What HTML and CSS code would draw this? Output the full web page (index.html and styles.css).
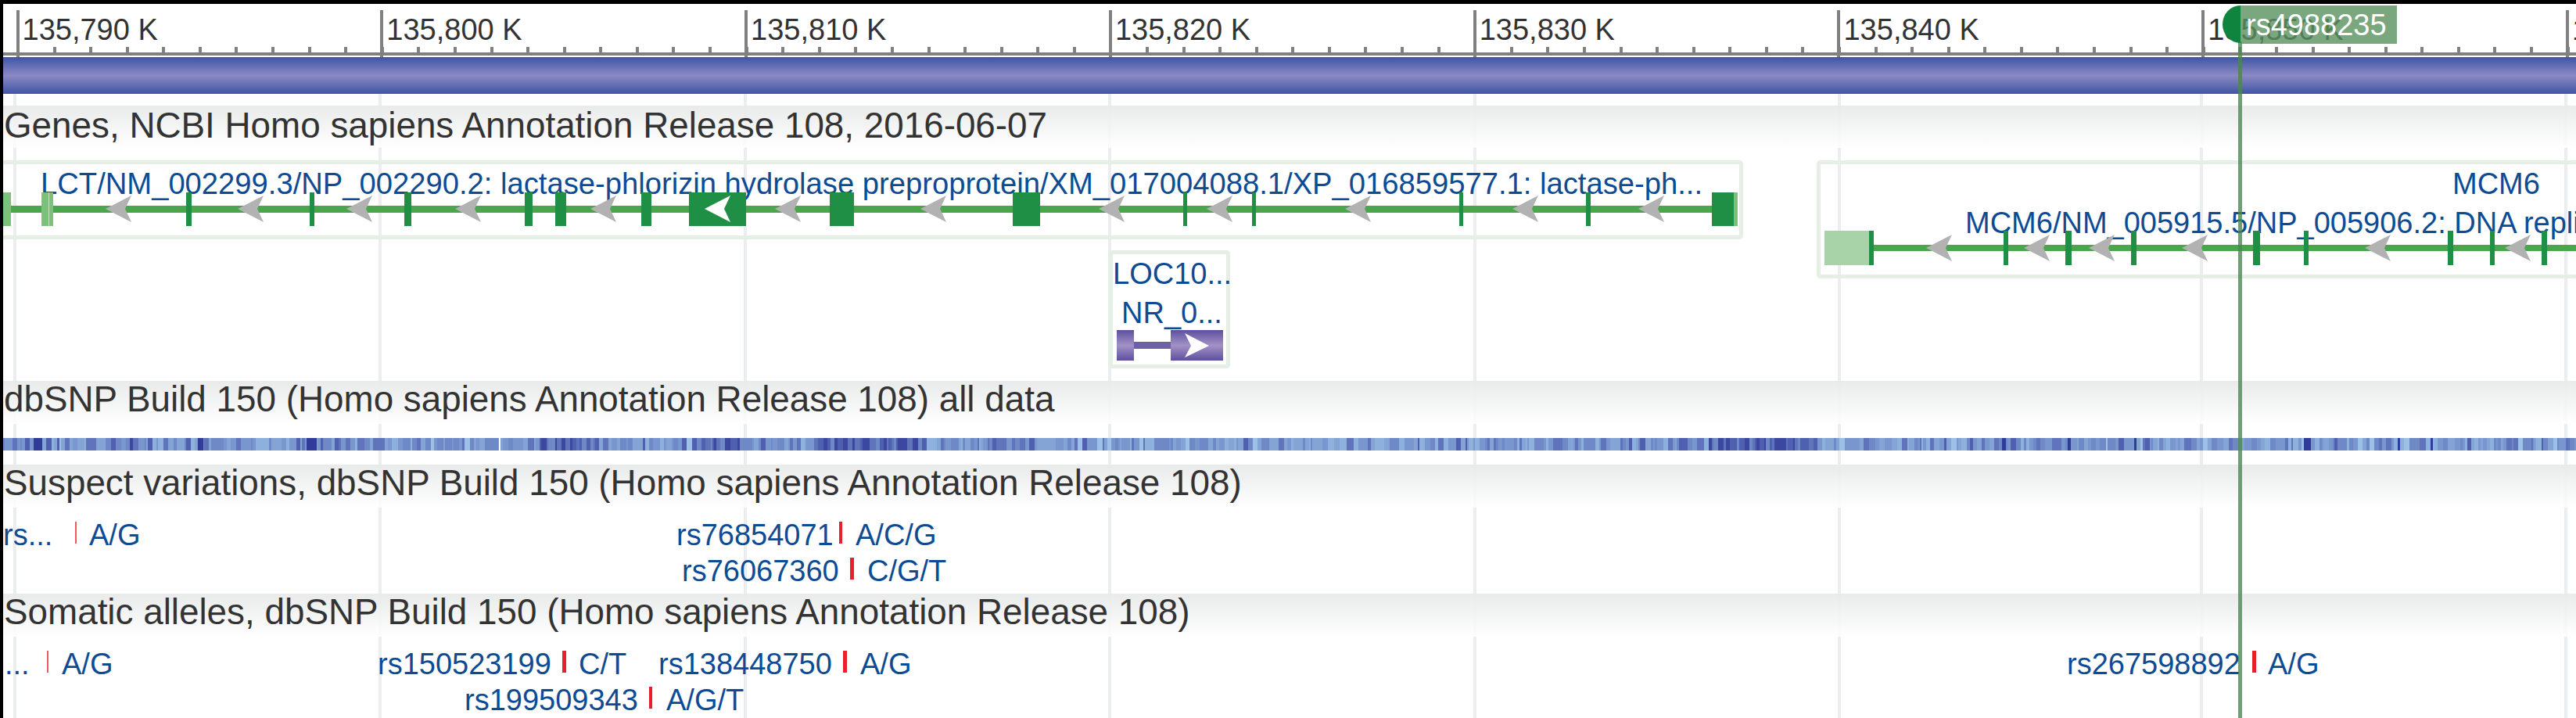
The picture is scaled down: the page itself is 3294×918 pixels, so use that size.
FILE: index.html
```html
<!DOCTYPE html>
<html lang="en">
<head>
    <meta charset="UTF-8">
    <title>Sequence viewer</title>
    <link rel="stylesheet" href="styles.css">
</head>
<body>
<div class="viewer">
    <!-- grid lines sit under all the tracks -->
    <svg class="grid-lines" width="3290" height="798" viewBox="4 120 3290 798">
        <rect x="17" y="120" width="4" height="798"/>
        <rect x="484" y="120" width="4" height="798"/>
        <rect x="951" y="120" width="4" height="798"/>
        <rect x="1417" y="120" width="4" height="798"/>
        <rect x="1884" y="120" width="4" height="798"/>
        <rect x="2350" y="120" width="4" height="798"/>
        <rect x="2813" y="120" width="4" height="798"/>
        <rect x="3279" y="120" width="4" height="798"/>
    </svg>

    <div class="tracks">
        <div class="ruler">
            <div class="ruler-cell">135,790 K</div>
            <div class="ruler-cell">135,800 K</div>
            <div class="ruler-cell">135,810 K</div>
            <div class="ruler-cell">135,820 K</div>
            <div class="ruler-cell">135,830 K</div>
            <div class="ruler-cell">135,840 K</div>
            <div class="ruler-cell">135,850 K</div>
            <div class="ruler-cell">135,860 K</div>
        </div>
        <div class="sequence-bar"></div>

        <div class="track-title track-title-first">Genes, NCBI Homo sapiens Annotation Release 108, 2016-06-07</div>
        <svg class="track-body" width="3290" height="298" viewBox="4 189 3290 298">
            <defs>
                <polygon id="arrow-left" points="0,0 33,-17 25,0 33,17"/>
                <linearGradient id="purple-exon" x1="0" y1="0" x2="0" y2="1">
                    <stop offset="0" stop-color="#5e4f9f"/>
                    <stop offset="0.5" stop-color="#a291c6"/>
                    <stop offset="1" stop-color="#5e4f9f"/>
                </linearGradient>
            </defs>

            <!-- LCT -->
            <rect class="gene-frame" x="-10" y="207.5" width="2236.5" height="96" rx="2"/>
            <text class="feature-label feature-label-long" x="52" y="248">LCT/NM_002299.3/NP_002290.2: lactase-phlorizin hydrolase preproprotein/XM_017004088.1/XP_016859577.1: lactase-ph...</text>
            <rect class="intron" x="4" y="263" width="2218" height="9"/>
            <rect class="utr" x="4" y="246" width="10" height="43"/>
            <rect class="utr" x="53" y="246" width="15" height="43"/>
            <rect class="utr-seam" x="62" y="246" width="1" height="43"/>
            <rect class="exon" x="238" y="246" width="7" height="43"/>
            <rect class="exon" x="396" y="246" width="6" height="43"/>
            <rect class="exon" x="517" y="246" width="9" height="43"/>
            <rect class="exon" x="671" y="246" width="10" height="43"/>
            <rect class="exon" x="710" y="246" width="14" height="43"/>
            <rect class="exon" x="820" y="246" width="13" height="43"/>
            <rect class="exon" x="881" y="246" width="73" height="43"/>
            <rect class="exon" x="1061" y="246" width="31" height="43"/>
            <rect class="exon" x="1295" y="246" width="35" height="43"/>
            <rect class="exon" x="1513" y="246" width="5" height="43"/>
            <rect class="exon" x="1601" y="246" width="5" height="43"/>
            <rect class="exon" x="1866" y="246" width="5" height="43"/>
            <rect class="exon" x="2028" y="246" width="6" height="43"/>
            <rect class="exon" x="2189" y="246" width="28" height="43"/>
            <rect class="utr" x="2217" y="246" width="5" height="43"/>
            <use class="arrow" href="#arrow-left" x="135" y="267"/>
            <use class="arrow" href="#arrow-left" x="304" y="267"/>
            <use class="arrow" href="#arrow-left" x="443" y="267"/>
            <use class="arrow" href="#arrow-left" x="582" y="267"/>
            <use class="arrow" href="#arrow-left" x="755" y="267"/>
            <use class="arrow-white" href="#arrow-left" x="901" y="267"/>
            <use class="arrow" href="#arrow-left" x="991" y="267"/>
            <use class="arrow" href="#arrow-left" x="1177" y="267"/>
            <use class="arrow" href="#arrow-left" x="1405" y="267"/>
            <use class="arrow" href="#arrow-left" x="1543" y="267"/>
            <use class="arrow" href="#arrow-left" x="1720" y="267"/>
            <use class="arrow" href="#arrow-left" x="1934" y="267"/>
            <use class="arrow" href="#arrow-left" x="2095" y="267"/>

            <!-- MCM6 -->
            <rect class="gene-frame" x="2325.5" y="207.5" width="1000" height="146" rx="2"/>
            <text class="feature-label" x="3136" y="248">MCM6</text>
            <text class="feature-label" x="2513" y="298">MCM6/NM_005915.5/NP_005906.2: DNA replication licensing factor MCM6</text>
            <rect class="intron" x="2390" y="313" width="904" height="8"/>
            <rect class="utr-pale" x="2333" y="295" width="57" height="44"/>
            <rect class="exon" x="2390" y="295" width="6" height="44"/>
            <rect class="exon" x="2562" y="295" width="6" height="44"/>
            <rect class="exon" x="2641" y="295" width="8" height="44"/>
            <rect class="exon" x="2725" y="295" width="7" height="44"/>
            <rect class="exon" x="2881" y="295" width="9" height="44"/>
            <rect class="exon" x="2946" y="295" width="6" height="44"/>
            <rect class="exon" x="3130" y="295" width="7" height="44"/>
            <rect class="exon" x="3184" y="295" width="6" height="44"/>
            <rect class="exon" x="3250" y="295" width="7" height="44"/>
            <use class="arrow" href="#arrow-left" x="2463" y="317"/>
            <use class="arrow" href="#arrow-left" x="2588" y="317"/>
            <use class="arrow" href="#arrow-left" x="2671" y="317"/>
            <use class="arrow" href="#arrow-left" x="2790" y="317"/>
            <use class="arrow" href="#arrow-left" x="3024" y="317"/>
            <use class="arrow" href="#arrow-left" x="3203" y="317"/>

            <!-- LOC -->
            <rect class="gene-frame" x="1420.5" y="322.5" width="150" height="146" rx="2"/>
            <text class="feature-label" x="1423" y="363">LOC10...</text>
            <text class="feature-label" x="1434" y="413">NR_0...</text>
            <rect class="rna-intron" x="1450" y="437" width="47" height="9"/>
            <rect class="rna-exon" x="1428" y="422" width="22" height="39"/>
            <rect class="rna-exon" x="1497" y="422" width="67" height="39"/>
            <polygon class="arrow-white" points="1515,426 1546,442 1515,457 1523,442"/>
        </svg>

        <div class="track-title">dbSNP Build 150 (Homo sapiens Annotation Release 108) all data</div>
        <div class="density-body">
            <svg id="density" class="density-bar" width="3290" height="16" viewBox="4 0 3290 16"></svg>
        </div>

        <div class="track-title">Suspect variations, dbSNP Build 150 (Homo sapiens Annotation Release 108)</div>
        <svg class="track-body" width="3290" height="110" viewBox="4 649 3290 110">
            <text class="feature-label" x="4" y="697">rs...</text>
            <rect class="allele-thin" x="96" y="667" width="2" height="28"/>
            <text class="feature-label" x="114" y="697">A/G</text>

            <text class="feature-label" x="865" y="697">rs76854071</text>
            <rect class="allele" x="1073" y="667" width="4" height="28"/>
            <text class="feature-label" x="1094" y="697">A/C/G</text>

            <text class="feature-label" x="872" y="743">rs76067360</text>
            <rect class="allele" x="1087" y="713" width="5" height="28"/>
            <text class="feature-label" x="1109" y="743">C/G/T</text>
        </svg>

        <div class="track-title">Somatic alleles, dbSNP Build 150 (Homo sapiens Annotation Release 108)</div>
        <svg class="track-body" width="3290" height="104" viewBox="4 814 3290 104">
            <text class="feature-label" x="6" y="862">...</text>
            <rect class="allele-thin" x="60" y="832" width="2" height="28"/>
            <text class="feature-label" x="79" y="862">A/G</text>

            <text class="feature-label" x="483" y="862">rs150523199</text>
            <rect class="allele" x="719" y="832" width="5" height="28"/>
            <text class="feature-label" x="740" y="862">C/T</text>

            <text class="feature-label" x="842" y="862">rs138448750</text>
            <rect class="allele" x="1078" y="832" width="5" height="28"/>
            <text class="feature-label" x="1100" y="862">A/G</text>

            <text class="feature-label" x="594" y="908">rs199509343</text>
            <rect class="allele" x="830" y="878" width="4" height="28"/>
            <text class="feature-label" x="852" y="908">A/G/T</text>

            <text class="feature-label" x="2643" y="862">rs267598892</text>
            <rect class="allele" x="2880" y="832" width="5" height="28"/>
            <text class="feature-label" x="2900" y="862">A/G</text>
        </svg>
    </div>

    <!-- rs4988235 marker, over everything -->
    <div class="marker">
        <div class="marker-line"></div>
        <div class="marker-cap"></div>
        <div class="marker-flag">rs4988235</div>
    </div>
</div>
<script src="script.js"></script>
</body>
</html>
```

FILE: styles.css
```css
html, body {
    margin: 0;
    height: 918px;
    overflow: hidden;
    background-color: #000;
}

.viewer {
    position: relative;
    width: 3290px;
    height: 913px;
    margin: 5px 0 0 4px;
    overflow: hidden;
    background-color: #fff;
    font-family: "Liberation Sans", Arial, sans-serif;
    color: #333;
}

.grid-lines {
    position: absolute;
    left: 0;
    top: 115px;
    fill: #ecedee;
}

.tracks {
    position: relative;
    z-index: 1;
}

.ruler {
    display: flex;
    height: 68px;
    padding-left: 16.5px;
    box-sizing: border-box;
    background:
        linear-gradient(#808080, #808080) 0 62px / 100% 4px no-repeat,
        repeating-linear-gradient(90deg, #808080 0 4px, transparent 4px 46.58px) 16.5px 55px / 100% 7px no-repeat;
}

.ruler-cell {
    flex: 0 0 465.8px;
    box-sizing: border-box;
    height: 60px;
    margin-top: 8px;
    padding: 6px 0 0 4px;
    border-left: 4px solid #808080;
    font-size: 38px;
    line-height: 38px;
    white-space: nowrap;
}

.sequence-bar {
    height: 47px;
    background: linear-gradient(#3f55a5, #8b89c4 50%, #3f55a5);
}

.track-title {
    height: 55px;
    padding-left: 1px;
    font-size: 45.8px;
    line-height: 48px;
    white-space: nowrap;
    background: linear-gradient(rgba(232, 233, 233, 0.96), rgba(255, 255, 255, 0.88));
}

.track-title-first {
    height: 54px;
    margin-top: 15px;
    line-height: 52px;
}

.track-body {
    display: block;
}

.density-body {
    height: 52px;
    padding-top: 18px;
    box-sizing: border-box;
}

.density-bar {
    display: block;
}

.feature-label {
    font-size: 38px;
    fill: #0d4c94;
}

.feature-label-long {
    font-size: 38.2px;
}

.gene-frame {
    fill: none;
    stroke: #e6efe6;
    stroke-width: 5;
}

.intron {
    fill: #4aa54d;
}

.exon {
    fill: #1f8f46;
}

.utr {
    fill: #7cc07c;
}

.utr-seam {
    fill: #c4e2c4;
}

.utr-pale {
    fill: #a8d3a8;
}

.arrow {
    fill: #b2b2b2;
}

.arrow-white {
    fill: #fff;
}

.rna-intron {
    fill: #6f5fa8;
}

.rna-exon {
    fill: url(#purple-exon);
}

.allele {
    fill: #e8202c;
}

.allele-thin {
    fill: #ee5a60;
}

.marker {
    position: absolute;
    z-index: 2;
    left: 2838px;
    top: 2px;
    bottom: 0;
    width: 223px;
}

.marker-line {
    position: absolute;
    left: 20px;
    top: 46px;
    bottom: 0;
    width: 5px;
    background-color: rgba(74, 135, 82, 0.8);
}

.marker-cap {
    position: absolute;
    left: 0;
    top: 0;
    width: 23px;
    height: 48px;
    border-radius: 100% 0 0 100% / 50%;
    background-color: #0e843e;
}

.marker-flag {
    position: absolute;
    left: 23px;
    top: 0;
    width: 200px;
    height: 49px;
    padding-left: 7px;
    box-sizing: border-box;
    font-size: 38px;
    line-height: 50px;
    color: #fff;
    background-color: rgba(90, 145, 95, 0.8);
}
```

FILE: script.js
```js
// density stripes for the dbSNP track
const svg = document.getElementById('density');
const NS = 'http://www.w3.org/2000/svg';

// darkest single stripes read off the real track: [start, end]
const darkSpots = [
    [43, 54], [253, 260], [392, 405], [2560, 2565], [2644, 2648],
    [2729, 2732], [2946, 2955], [3066, 3069], [3108, 3111]
];

// stretches of the track that run darker overall
const darkRuns = [[690, 760], [883, 953], [1040, 1180], [2180, 2320]];

const palette = ['#9cc0e6', '#8db0dd', '#84a4d6', '#7a96cf', '#6f88c6', '#5f74bb', '#4f60b0', '#3c489f'];

let seed = 4988235;
function next() {
    seed = (seed * 16807) % 2147483647;
    return seed / 2147483647;
}

function addStripe(x, width, color) {
    const rect = document.createElementNS(NS, 'rect');
    rect.setAttribute('x', x);
    rect.setAttribute('y', 0);
    rect.setAttribute('width', width);
    rect.setAttribute('height', 16);
    rect.setAttribute('fill', color);
    svg.appendChild(rect);
}

let x = 4;
while (x < 3294) {
    const width = 2 + Math.floor(next() * 6);
    const inRun = darkRuns.some(run => x >= run[0] && x < run[1]);
    const shade = inRun ? 0.5 + next() * 0.5 : (next() + next()) * 0.45;
    addStripe(x, width, palette[Math.floor(shade * palette.length) % palette.length]);
    x += width;
}

darkSpots.forEach(spot => {
    addStripe(spot[0], spot[1] - spot[0], '#2f3c99');
});
addStripe(638, 2, '#ffffff');
```
